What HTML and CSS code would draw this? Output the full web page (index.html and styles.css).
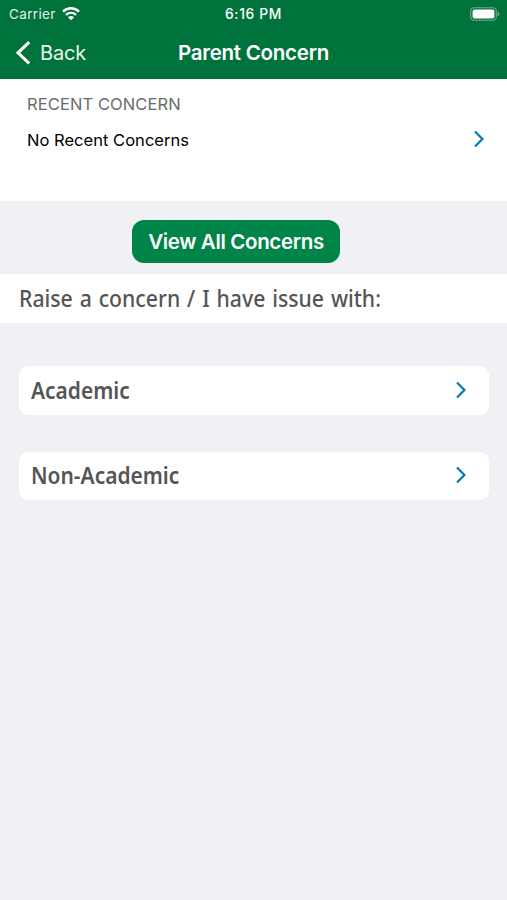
FILE: index.html
```html
<!DOCTYPE html>
<html lang="en">
<head>
<meta charset="utf-8">
<title>Parent Concern</title>
<link rel="stylesheet" href="styles.css">
</head>
<body>
<header class="header">
  <div class="status">
    <div class="carrier"><span class="carrier-name">Carrier</span>
      <svg class="wifi" width="18" height="14" viewBox="0 0 18 14" fill="none" stroke="#fff" stroke-width="2.4"><path d="M1 4.6C5.6.1 12.4.1 17 4.6"/><path d="M4 7.9c2.9-2.7 7.1-2.7 10 0"/><path d="M9 13.2 6 10.3c1.7-1.6 4.3-1.6 6 0z" fill="#fff" stroke="none"/></svg>
    </div>
    <time class="clock">6:16 PM</time>
    <svg class="battery" width="30" height="14" viewBox="0 0 30 14"><rect x=".7" y=".7" width="25.6" height="12.6" rx="3.6" fill="none" stroke="#70ad89" stroke-width="1.1"/><rect x="2.6" y="2.5" width="21.8" height="9" rx="2" fill="#fff"/><path d="M27.6 4.8c2.4.7 2.4 3.7 0 4.4z" fill="#70ad89"/></svg>
  </div>
  <nav class="nav">
    <a class="back"><svg width="16" height="24" viewBox="0 0 16 24" fill="none" stroke="#fff" stroke-width="3.1"><path d="M14.2 1.2 3 11.8l11.2 10.6"/></svg><span class="back-label">Back</span></a>
    <h1 class="title">Parent Concern</h1>
  </nav>
</header>
<main>
  <section class="recent">
    <div>
      <h2 class="recent-title">RECENT CONCERN</h2>
      <p class="recent-text">No Recent Concerns</p>
    </div>
    <svg class="chevron" width="12" height="18" viewBox="0 0 12 18"><path d="m2 1.5 7.4 7.5L2 16.5"/></svg>
  </section>
  <div class="actions"><button class="view-all">View All Concerns</button></div>
  <h2 class="prompt"><span class="narrow">Raise a concern / I have issue with:</span></h2>
  <div class="choices">
    <a class="choice"><span class="narrow">Academic</span><svg class="chevron" width="12" height="18" viewBox="0 0 12 18"><path d="m2 1.5 7.4 7.5L2 16.5"/></svg></a>
    <a class="choice choice-short"><span class="narrow">Non-Academic</span><svg class="chevron" width="12" height="18" viewBox="0 0 12 18"><path d="m2 1.5 7.4 7.5L2 16.5"/></svg></a>
  </div>
</main>
</body>
</html>
```
FILE: styles.css
```css
* { box-sizing: border-box; }
body { margin: 0; min-height: 900px; background: #f0f0f5; font-family: Inter, "Liberation Sans", sans-serif; color: #000; }
h1, h2, p { margin: 0; font-weight: 400; white-space: nowrap; }
svg { display: block; flex: none; }
.header { height: 79px; background: #00733c; color: #fff; }
.status { display: grid; grid-template-columns: 1fr auto 1fr; align-items: center; height: 27px; padding: 0 7px 0 9px; }
.carrier { display: flex; align-items: center; gap: 6px; font-size: 13.5px; color: #e3f2e9; }
.carrier-name { letter-spacing: .35px; }
.clock { margin-left: -2px; font-size: 13.8px; font-weight: 500; letter-spacing: .65px; }
.battery { justify-self: end; }
.nav { display: grid; grid-template-columns: 1fr auto 1fr; align-items: center; height: 51px; padding: 0 15px; }
.back { display: flex; align-items: center; gap: 9px; font-size: 20px; letter-spacing: -.2px; color: #e8f6ed; }
.title { font-size: 20.5px; font-weight: 560; letter-spacing: -.25px; }
.recent { display: flex; justify-content: space-between; height: 122px; padding: 14px 22px 0 27px; background: #fff; }
.recent-title { font-size: 16.5px; line-height: 22px; letter-spacing: .1px; color: #6b6b6b; }
.recent-text { margin-top: 14px; font-size: 16.5px; line-height: 22px; letter-spacing: .03px; }
.recent .chevron { margin-top: 37px; }
.chevron { fill: none; stroke: #087bb5; stroke-width: 2.3; }
.actions { display: flex; height: 73px; padding: 19px 0 0 132px; }
.view-all { width: 208px; height: 43px; padding: 0 0 1px; border: 0; border-radius: 12px; background: #008448; color: #fff; font: 560 20.5px Inter, sans-serif; letter-spacing: -.35px; white-space: nowrap; }
.prompt { display: flex; align-items: center; height: 49px; padding: 0 0 2px 19px; background: #fff; color: #555; font: 550 23px "Noto Sans", sans-serif; word-spacing: 1.5px; }
.narrow { transform: scaleX(.91); transform-origin: left center; white-space: nowrap; }
.prompt .narrow { transform: scaleX(.922); }
.choices { display: flex; flex-direction: column; gap: 37px; padding: 43px 18px 0 19px; }
.choice { display: flex; align-items: center; justify-content: space-between; height: 49px; padding: 0 22px 2px 12px; border-radius: 9px; background: #fff; color: #555; font: 570 23px "Noto Sans", sans-serif; }
.choice-short { height: 48px; }
```
